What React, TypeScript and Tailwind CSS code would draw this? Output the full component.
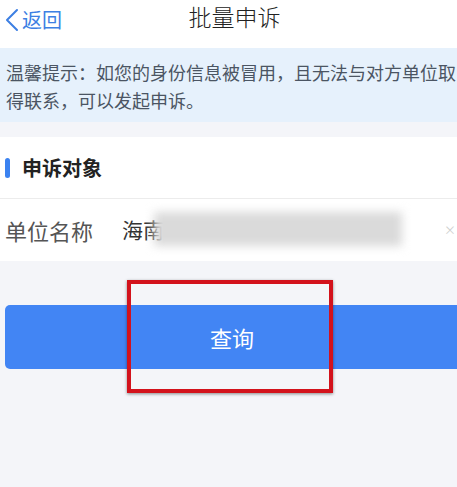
const font = { fontFamily: '"Noto Sans CJK SC", "Noto Sans", sans-serif' };

export default function App() {
  return (
    <div
      style={font}
      className="relative w-[457px] h-[487px] overflow-hidden bg-[#f4f5f9] flex flex-col"
    >
      {/* Nav bar */}
      <div className="h-[48px] bg-white flex items-center relative flex-shrink-0 pb-[8px]">
        <div className="flex items-center text-[#3d7fe3] pl-[4px] gap-[3px]">
          <svg width="15" height="24" viewBox="0 0 15 24" fill="none" stroke="currentColor" strokeWidth="2" strokeLinecap="round" strokeLinejoin="round">
            <path d="M13 2 L3 12 L13 22" />
          </svg>
          <span className="text-[20px] leading-none">返回</span>
        </div>
        <div className="absolute inset-x-0 pl-[12px] pb-[8px] text-center text-[23px] font-light text-[#222] leading-none pointer-events-none">
          批量申诉
        </div>
      </div>

      {/* Notice */}
      <div className="bg-[#e6f1fc] px-[6px] pt-[10px] pb-[12px] text-[18px] leading-[28px] text-[#4b5563] flex-shrink-0 h-[74px] whitespace-nowrap">
        <p>温馨提示：如您的身份信息被冒用，且无法与对方单位取</p>
        <p>得联系，可以发起申诉。</p>
      </div>

      <div className="h-[15px] flex-shrink-0" />

      {/* Section */}
      <div className="bg-white flex-shrink-0">
        <div className="h-[62px] flex items-center gap-[12px] pl-[5px] border-b border-[#ececec]">
          <span className="w-[5px] h-[20px] rounded-full bg-[#3b82f0]" />
          <span className="text-[20px] font-bold text-[#222]">申诉对象</span>
        </div>
        <div className="h-[62px] flex items-center pl-[5px] relative">
          <span className="text-[22px] text-[#555] w-[117px]">单位名称</span>
          <span className="text-[21px] text-[#333]">海南</span>
          <div className="absolute left-[154px] top-[13px] w-[248px] h-[34px] bg-[#dadada] blur-[5px]" />
          <span className="absolute right-[1px] text-[12px] leading-none text-[#cfcfcf]">×</span>
        </div>
      </div>

      {/* Button */}
      <div className="pt-[44px] pl-[5px]">
        <button className="w-[470px] h-[64px] rounded-[5px] bg-[#4285f4] text-white text-[22px] flex items-center justify-start">
          <span className="ml-[205px]">查询</span>
        </button>
      </div>

      {/* Annotation box */}
      <div className="absolute left-[127px] top-[280px] w-[206px] h-[113px] border-[4px] border-[#d3121c] shadow-[0_1px_3px_rgba(0,0,0,0.45)]" />
    </div>
  );
}
